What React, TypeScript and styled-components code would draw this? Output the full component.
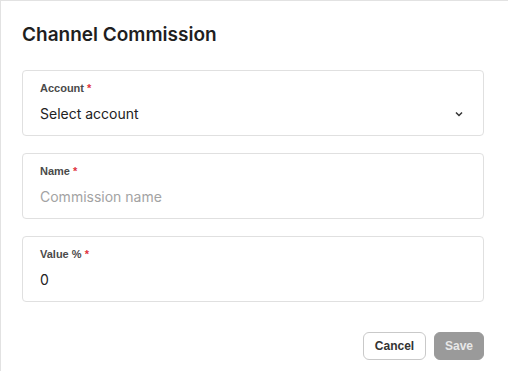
import styled, { createGlobalStyle } from 'styled-components';

const Global = createGlobalStyle`
  html, body { margin: 0; padding: 0; background: #fff; }
  body { font-family: Inter, "Noto Sans", sans-serif; }
`;

const fields = [
  { label: 'Account', value: 'Select account', select: true },
  { label: 'Name', placeholder: 'Commission name' },
  { label: 'Value %', value: '0' },
];

export default function App() {
  return (
    <>
      <Global />
      <Dialog>
        <Title>Channel Commission</Title>
        <Form>
          {fields.map((f) => (
            <Field key={f.label}>
              <Label>
                {f.label} <Req>*</Req>
              </Label>
              <ValueRow>
                <Value $placeholder={!f.value}>{f.value || f.placeholder}</Value>
                {f.select && (
                  <svg width='10' height='10' viewBox='0 0 10 10'>
                    <path d='M2 3.5 L5 6.5 L8 3.5' fill='none' stroke='#333' strokeWidth='1.5' />
                  </svg>
                )}
              </ValueRow>
            </Field>
          ))}
        </Form>
        <Actions>
          <Button $width={63}>Cancel</Button>
          <Button $primary $width={50} disabled>
            Save
          </Button>
        </Actions>
      </Dialog>
    </>
  );
}

const Dialog = styled.div`
  width: 508px;
  height: 371px;
  box-sizing: border-box;
  border-top: 1px solid #e2e2e2;
  border-left: 1px solid #e2e2e2;
  padding: 0 24px 0 21px;
`;

const Title = styled.h2`
  margin: 0;
  padding-top: 22px;
  font-size: 19px;
  line-height: 24px;
  font-weight: 600;
  color: #1f1f1f;
`;

const Form = styled.div`
  margin-top: 23px;
  display: flex;
  flex-direction: column;
  gap: 17px;
`;

const Field = styled.div`
  height: 66px;
  box-sizing: border-box;
  border: 1px solid #e0e0e0;
  border-radius: 4px;
  padding: 10px 19px 0 17px;
`;

const Label = styled.div`
  font-family: 'Liberation Sans', Arial, sans-serif;
  font-size: 11px;
  line-height: 14px;
  font-weight: 700;
  color: #4a4a4a;
`;

const Req = styled.span`
  color: #e0323c;
`;

const ValueRow = styled.div`
  margin-top: 9px;
  display: flex;
  align-items: center;
  justify-content: space-between;
`;

const Value = styled.div<{ $placeholder?: boolean }>`
  font-size: 14px;
  line-height: 20px;
  color: ${(p) => (p.$placeholder ? '#a3a3a3' : '#222')};
`;

const Actions = styled.div`
  margin-top: 30px;
  display: flex;
  justify-content: flex-end;
  gap: 8px;
`;

const Button = styled.button<{ $primary?: boolean; $width: number }>`
  width: ${(p) => p.$width}px;
  height: 28px;
  box-sizing: border-box;
  padding: 0;
  border-radius: 6px;
  font-family: 'Liberation Sans', Arial, sans-serif;
  font-size: 12px;
  font-weight: 700;
  border: 1px solid ${(p) => (p.$primary ? '#9a9a9a' : '#c9c9c9')};
  background: ${(p) => (p.$primary ? '#9a9a9a' : '#fff')};
  color: ${(p) => (p.$primary ? '#e8e8e8' : '#333')};
`;
